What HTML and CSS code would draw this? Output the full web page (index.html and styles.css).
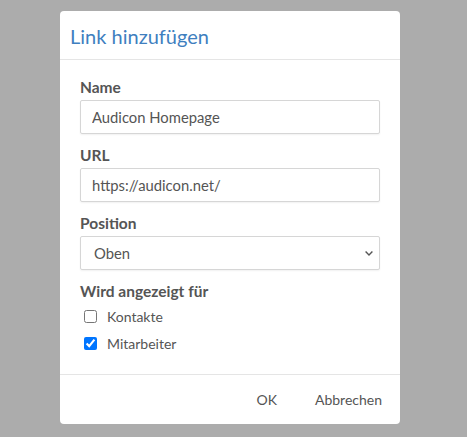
FILE: index.html
```html
<!DOCTYPE html>
<html lang="de">
<head>
<meta charset="utf-8">
<title>Link hinzufügen</title>
<link rel="stylesheet" href="styles.css">
</head>
<body>
<div class="dialog">
  <div class="dialog-header">
    <h1 class="dialog-title">Link hinzufügen</h1>
  </div>
  <div class="dialog-body">
    <div class="form-group">
      <label class="form-label" for="name">Name</label>
      <input class="form-control" id="name" type="text" value="Audicon Homepage">
    </div>
    <div class="form-group">
      <label class="form-label" for="url">URL</label>
      <input class="form-control" id="url" type="text" value="https://audicon.net/">
    </div>
    <div class="form-group">
      <label class="form-label" for="pos">Position</label>
      <div class="select-wrap">
        <select class="form-control form-select" id="pos">
          <option>Oben</option>
          <option>Unten</option>
        </select>
        <svg class="chevron" width="8" height="5" viewBox="0 0 8 5"><path d="M0.6 0.6l3.4 3.4 3.4-3.4" fill="none" stroke="#555" stroke-width="1.4"/></svg>
      </div>
    </div>
    <div class="form-group last">
      <div class="form-label check-title">Wird angezeigt für</div>
      <label class="check"><input type="checkbox"> <span>Kontakte</span></label>
      <label class="check"><input type="checkbox" checked> <span>Mitarbeiter</span></label>
    </div>
  </div>
  <div class="dialog-footer">
    <button class="btn" type="button">OK</button>
    <button class="btn" type="button">Abbrechen</button>
  </div>
</div>
</body>
</html>
```
FILE: styles.css
```css
html, body {
  margin: 0;
  padding: 0;
}
body {
  background: #acacac;
  font-family: Lato, "Open Sans", sans-serif;
  font-size: 14px;
  color: #555;
  padding: 11px 0 0 60px;
  height: 437px;
  box-sizing: border-box;
}
.dialog {
  width: 340px;
  background: #fff;
  border-radius: 4px;
}
.dialog-header {
  padding: 12px 10px 10px;
  border-bottom: 1px solid #e5e5e5;
}
.dialog-title {
  margin: 0;
  font-size: 20px;
  font-weight: 400;
  line-height: 26px;
  color: #3f7fbf;
}
.dialog-body {
  padding: 18px 20px 17px;
}
.form-group {
  margin-bottom: 12px;
}
.form-group.last {
  margin-bottom: 0;
}
.form-label {
  display: block;
  font-size: 15.5px;
  font-weight: 700;
  line-height: 18px;
  margin-bottom: 4px;
  color: #555;
}
.form-label.check-title {
  margin-bottom: 3px;
}
.form-control {
  display: block;
  box-sizing: border-box;
  width: 100%;
  height: 34px;
  padding: 0 11px;
  border: 1px solid #d6d6d6;
  border-radius: 2px;
  box-shadow: 0 1px 2px rgba(0,0,0,0.06);
  font-family: inherit;
  font-size: 14.8px;
  color: #555;
  background: #fff;
  outline: none;
}
.select-wrap {
  position: relative;
}
.form-select {
  appearance: none;
  -webkit-appearance: none;
  padding-left: 13px;
}
.chevron {
  position: absolute;
  right: 7px;
  top: 15px;
}
.check {
  display: flex;
  align-items: center;
  height: 27px;
  font-size: 14px;
  color: #555;
}
.check input {
  margin: 0 10px 0 4px;
  width: 13px;
  height: 13px;
}
.dialog-footer {
  border-top: 1px solid #e5e5e5;
  display: flex;
  justify-content: flex-end;
  gap: 14px;
  padding: 8px 6px;
}
.btn {
  background: none;
  border: none;
  font-family: inherit;
  font-size: 14px;
  color: #555;
  padding: 6px 12px;
  line-height: 21px;
}
```
